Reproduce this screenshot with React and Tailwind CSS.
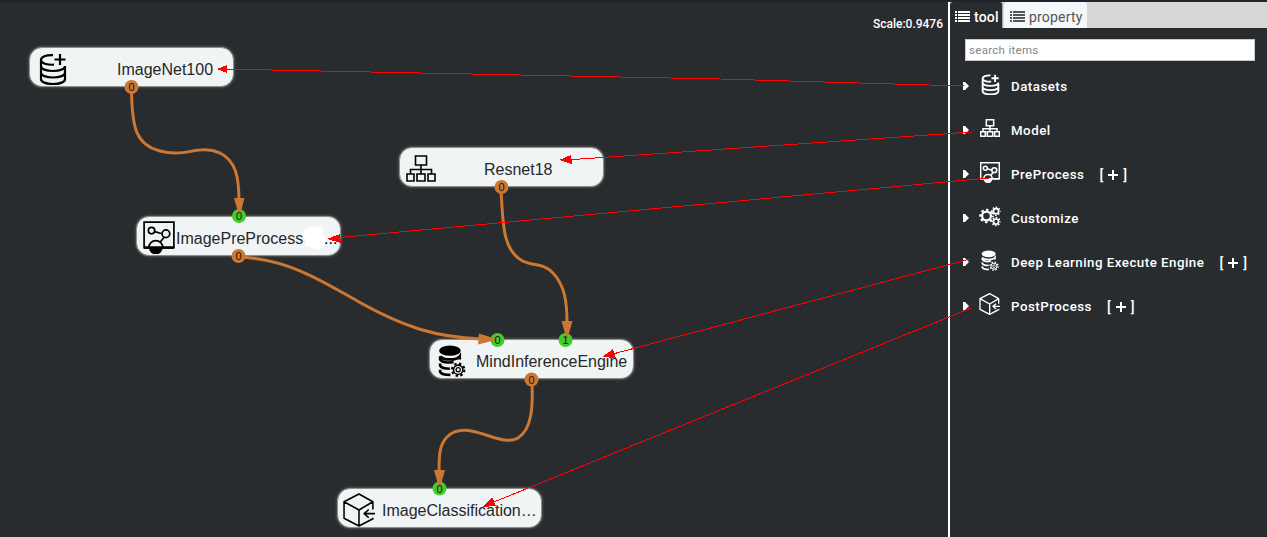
import React from "react";

function DatasetIcon({ className, weight = 2.2 }) {
  return (
    <svg viewBox="0 0 28 32" className={className} fill="none" stroke="currentColor" strokeWidth={weight}>
      <path d="M14 2.200C7 2 2 3.800 2 7c0 3.300 6 5 13 4.700M2 7v19c0 3 5 5 12 5s12-2 12-5V14M2 13c0 3 5 5 12 5s12-2 12-5M2 19.500c0 3 5 5 12 5s12-2 12-5M21 1v11M15.500 6.500h11" />
    </svg>
  );
}

function ModelIcon({ className, weight = 1.6 }) {
  return (
    <svg viewBox="0 0 30 27" className={className} fill="none" stroke="currentColor" strokeWidth={weight}>
      <path d="M9.500 1h11v9h-11zM15 10v9M4.500 19v-4.500h21V19M1 19h7v7H1zM11 19h8v7h-8zM22 19h7v7h-7z" />
    </svg>
  );
}

function PreProcessIcon({ className, weight = 1.6 }) {
  return (
    <svg viewBox="0 0 30 31" className={className} fill="none" stroke="currentColor" strokeWidth={weight}>
      <path d="M1 1h28v24H1zM11 10l7 2M20 15l-4 5" />
      <path d="M1 25h28" strokeWidth="2.400" />
      <circle cx="8" cy="9" r="3" />
      <circle cx="21.500" cy="12" r="3.600" />
      <path d="M5.500 25a6.500 6.500 0 0 1 13 0" />
      <path d="M5.500 25a6.500 6.500 0 0 0 13 0z" fill="currentColor" stroke="none" />
    </svg>
  );
}

function EngineIcon({ className }) {
  return (
    <svg viewBox="0 0 27 31" className={className} fill="none" stroke="currentColor" strokeWidth="2.600">
      <ellipse cx="11.500" cy="5.500" rx="10.500" ry="5" fill="currentColor" stroke="none" />
      <path d="M2 11c3 4 16 4 19 0v3M2 11v3c2 3 8 3.500 13 2.500M2 18v2c1 2 5 3 9.500 3M2 24v2c1 2 5 3 10 3" />
      <circle cx="19.500" cy="24" r="4.500" strokeWidth="1.500" />
      <circle cx="19.500" cy="24" r="2" strokeWidth="1.200" />
      <circle cx="19.500" cy="24" r="6" strokeWidth="2" strokeDasharray="2.350 2.360" />
    </svg>
  );
}

function PostProcessIcon({ className, weight = 1.5 }) {
  return (
    <svg viewBox="0 0 32 33" className={className} fill="none" stroke="currentColor" strokeWidth={weight} strokeLinejoin="round">
      <path d="M29 16V8.500L15.500 1 1 8.500v16L15.500 32 29 25v-1M1 8.500l14.500 8L29 8.500M15.500 16.500V32M31 20H21M25 16l-4.500 4 4.500 4" />
    </svg>
  );
}

function CogsIcon({ className }) {
  return (
    <svg viewBox="0 0 22 21" className={className} fill="none" stroke="currentColor">
      <circle cx="7.500" cy="10" r="4.400" strokeWidth="2.200" />
      <circle cx="7.500" cy="10" r="6.300" strokeWidth="2" strokeDasharray="2.470 2.478" strokeDashoffset="1.235" />
      <circle cx="17" cy="5.200" r="2.600" strokeWidth="1.600" />
      <circle cx="17" cy="5.200" r="4" strokeWidth="1.500" strokeDasharray="1.570 1.572" strokeDashoffset="0.785" />
      <circle cx="17" cy="15.600" r="2.600" strokeWidth="1.600" />
      <circle cx="17" cy="15.600" r="4" strokeWidth="1.500" strokeDasharray="1.570 1.572" strokeDashoffset="0.785" />
    </svg>
  );
}

function ListIcon() {
  return (
    <svg viewBox="0 0 15 11" className="h-[11px] w-[15px] shrink-0" fill="currentColor" shapeRendering="crispEdges">
      <path d="M0 0h2v2H0zM3 0h12v2H3zM0 3h2v2H0zM3 3h12v2H3zM0 6h2v2H0zM3 6h12v2H3zM0 9h2v2H0zM3 9h12v2H3z" />
    </svg>
  );
}

function Node({ place, label, labelPlace, children }) {
  return (
    <div className={`absolute h-10 w-[205px] rounded-[13px] border border-[#8d8c86] bg-[#f0f4f5] text-black shadow-[0_0_3px_#77766f] ${place}`}>
      {children}
      <span className={`absolute top-[10px] text-base leading-6 whitespace-nowrap text-[#25282a] ${labelPlace}`}>{label}</span>
    </div>
  );
}

const edges = [
  "M131.500 90C132 128 136 145 160 151C185 158 199 144 220 153C236 161 239 177 239 202",
  "M501 190C503 225 503 249 521 260C532 267 542 262 552 272C565 285 567 302 567 323",
  "M242 257C292 261 322 281 359 302C406 328 436 337 481 339",
  "M532 382C533 407 532 429 518 438C500 449 467 417 447 437C439 445 439 457 439 473",
];
const heads = [
  "M234 198h10.500L239.500 217z",
  "M561.500 321h11L567 340z",
  "M479 333.500L498 339.500L478 344.500z",
  "M434 470H445L439.500 490z",
];
const ports = [
  [131.500, 87, "0", "#cc7832"], [239, 216, "0", "#43cb2f"], [238.500, 256, "0", "#cc7832"],
  [501.500, 187, "0", "#cc7832"], [497.500, 340, "0", "#43cb2f"], [565.500, 340, "1", "#43cb2f"],
  [531.500, 379.500, "0", "#cc7832"], [439.500, 488.500, "0", "#43cb2f"],
];
const links = [
  ["M964 86L720 79L221 69", "M217 69l10-4v8z"],
  ["M972 132L566 160", "M559 160l12-5 1 9z"],
  ["M989 178L334 238", "M327 239l13-5 1 9z"],
  ["M970 259L609 355", "M602 357l11-8 3 9z"],
  ["M971 308L489 504", "M482 507l10-10 4 9z"],
];

function Canvas() {
  return (
    <section className="relative w-[948px] shrink-0 font-['Liberation_Sans',sans-serif]">
      <div className="flex justify-end pt-[15px] pr-[5px] font-[Roboto,sans-serif] text-xs leading-[18px] font-medium text-white">Scale:0.9476</div>
      <Node place="left-[29px] top-[47px]" label="ImageNet100" labelPlace="left-[87px]">
        <DatasetIcon className="absolute left-[9px] top-[5px] h-[32px] w-[28px]" />
      </Node>
      <Node place="left-[136px] top-[216px]" label="ImagePreProcess" labelPlace="left-[39px]">
        <PreProcessIcon className="absolute left-[6px] top-[4px] h-[33px] w-[32px]" />
        <span className="absolute left-[187px] top-[10px] text-base leading-6">...</span>
      </Node>
      <Node place="left-[399px] top-[147px]" label="Resnet18" labelPlace="left-[84px]">
        <ModelIcon className="absolute left-[6px] top-[7px] h-[27px] w-[30px]" />
      </Node>
      <Node place="left-[429px] top-[339px]" label="MindInferenceEngine" labelPlace="left-[46px]">
        <EngineIcon className="absolute left-[8px] top-[5px] h-[32px] w-[28px]" />
      </Node>
      <Node place="left-[337px] top-[488px]" label="ImageClassification…" labelPlace="left-[44px]">
        <PostProcessIcon className="absolute left-[5px] top-[4px] h-[34px] w-[33px]" />
      </Node>
      <svg className="absolute left-0 top-0 h-[537px] w-[948px]" viewBox="0 0 948 537" fill="none">
        {ports.map(([x, y, , color]) => <circle key={`${x}-${y}`} cx={x} cy={y} r="7" fill={color} />)}
        {edges.map((d) => <path key={d} d={d} stroke="#cc7832" strokeWidth="3" />)}
        {heads.map((d) => <path key={d} d={d} fill="#cc7832" />)}
        {ports.map(([x, y, value]) => (
          <text key={`${x}-${y}`} x={x} y={y + 4} textAnchor="middle" fontSize="11" fill="#1d1505">{value}</text>
        ))}
        <path d="M305 229l8-3 4 2 4-2 3 5-1 5 3 4-3 8-6 2-7-3-6-1 2-6-4-5z" fill="#fff" />
      </svg>
    </section>
  );
}

function MenuItem({ icon, label, expandable }) {
  return (
    <li className="flex h-11 items-center">
      <svg viewBox="0 0 6 8" className="mr-[9px] mb-[3px] h-2 w-[6px]" fill="currentColor"><path d="M0 0h2l4 4-4 4H0z" /></svg>
      <span className="mb-[6px] flex h-6 w-[24px] items-center justify-center">{icon}</span>
      <span className="ml-[9px] text-[13.300px] font-medium tracking-[0.490px] whitespace-nowrap">{label}</span>
      {expandable && (
        <span className="ml-[15px] flex items-center text-sm font-medium">
          [<svg viewBox="0 0 10 10" className="mx-[5px] h-[10px] w-[10px]" fill="none" stroke="currentColor" strokeWidth="2"><path d="M5 0v10M0 5h10" /></svg>]
        </span>
      )}
    </li>
  );
}

const items = [
  { label: "Datasets", icon: <DatasetIcon weight={2.8} className="h-[21px] w-[19px]" /> },
  { label: "Model", icon: <ModelIcon weight={2.3} className="h-[18px] w-5" /> },
  { label: "PreProcess", icon: <PreProcessIcon weight={2.3} className="h-[21px] w-5" />, expandable: true },
  { label: "Customize", icon: <CogsIcon className="h-[21px] w-[22px]" /> },
  { label: "Deep Learning Execute Engine", icon: <EngineIcon className="h-[21px] w-[18px]" />, expandable: true },
  { label: "PostProcess", icon: <PostProcessIcon weight={2} className="h-[22px] w-[22px]" />, expandable: true },
];

function ToolPanel() {
  return (
    <aside className="min-w-0 flex-1 border-l-2 border-white font-[Roboto,sans-serif] text-white">
      <div className="mt-[2px] flex h-[26px] bg-[#d7d7d7] text-sm">
        <div className="flex w-[53px] items-center gap-1 rounded-t-[3px] border-r border-[#aaa] bg-[#292c2f] pt-[3px] pl-[5px] font-medium tracking-[0.200px]">
          <ListIcon />tool
        </div>
        <div className="ml-px flex w-[83px] items-center gap-1 rounded-t-[3px] bg-[#f5f8fa] pt-[3px] pl-[6px] tracking-[0.200px] text-[#555]">
          <ListIcon />property
        </div>
      </div>
      <input
        placeholder="search items"
        className="mt-[11px] ml-[15px] block h-[22px] w-[290px] border border-[#ccc] bg-white px-[3px] text-[11.500px] tracking-[0.300px] text-[#555] outline-none placeholder:text-[#858585]"
      />
      <ul className="mt-[4px] ml-[13px]">
        {items.map((item) => <MenuItem key={item.label} {...item} />)}
      </ul>
    </aside>
  );
}

export default function App() {
  return (
    <main className="relative flex h-[537px] w-[1267px] overflow-hidden border-t-2 border-[#20232b] bg-[#292c2f]">
      <div className="-mt-[2px] flex w-full">
        <Canvas />
        <ToolPanel />
      </div>
      <svg className="pointer-events-none absolute left-0 -top-[2px] h-[537px] w-[1267px]" viewBox="0 0 1267 537">
        {links.map(([line, head]) => (
          <g key={line} shapeRendering="crispEdges">
            <path d={line} fill="none" stroke="#f00" />
            <path d={head} fill="#f00" />
          </g>
        ))}
      </svg>
    </main>
  );
}
